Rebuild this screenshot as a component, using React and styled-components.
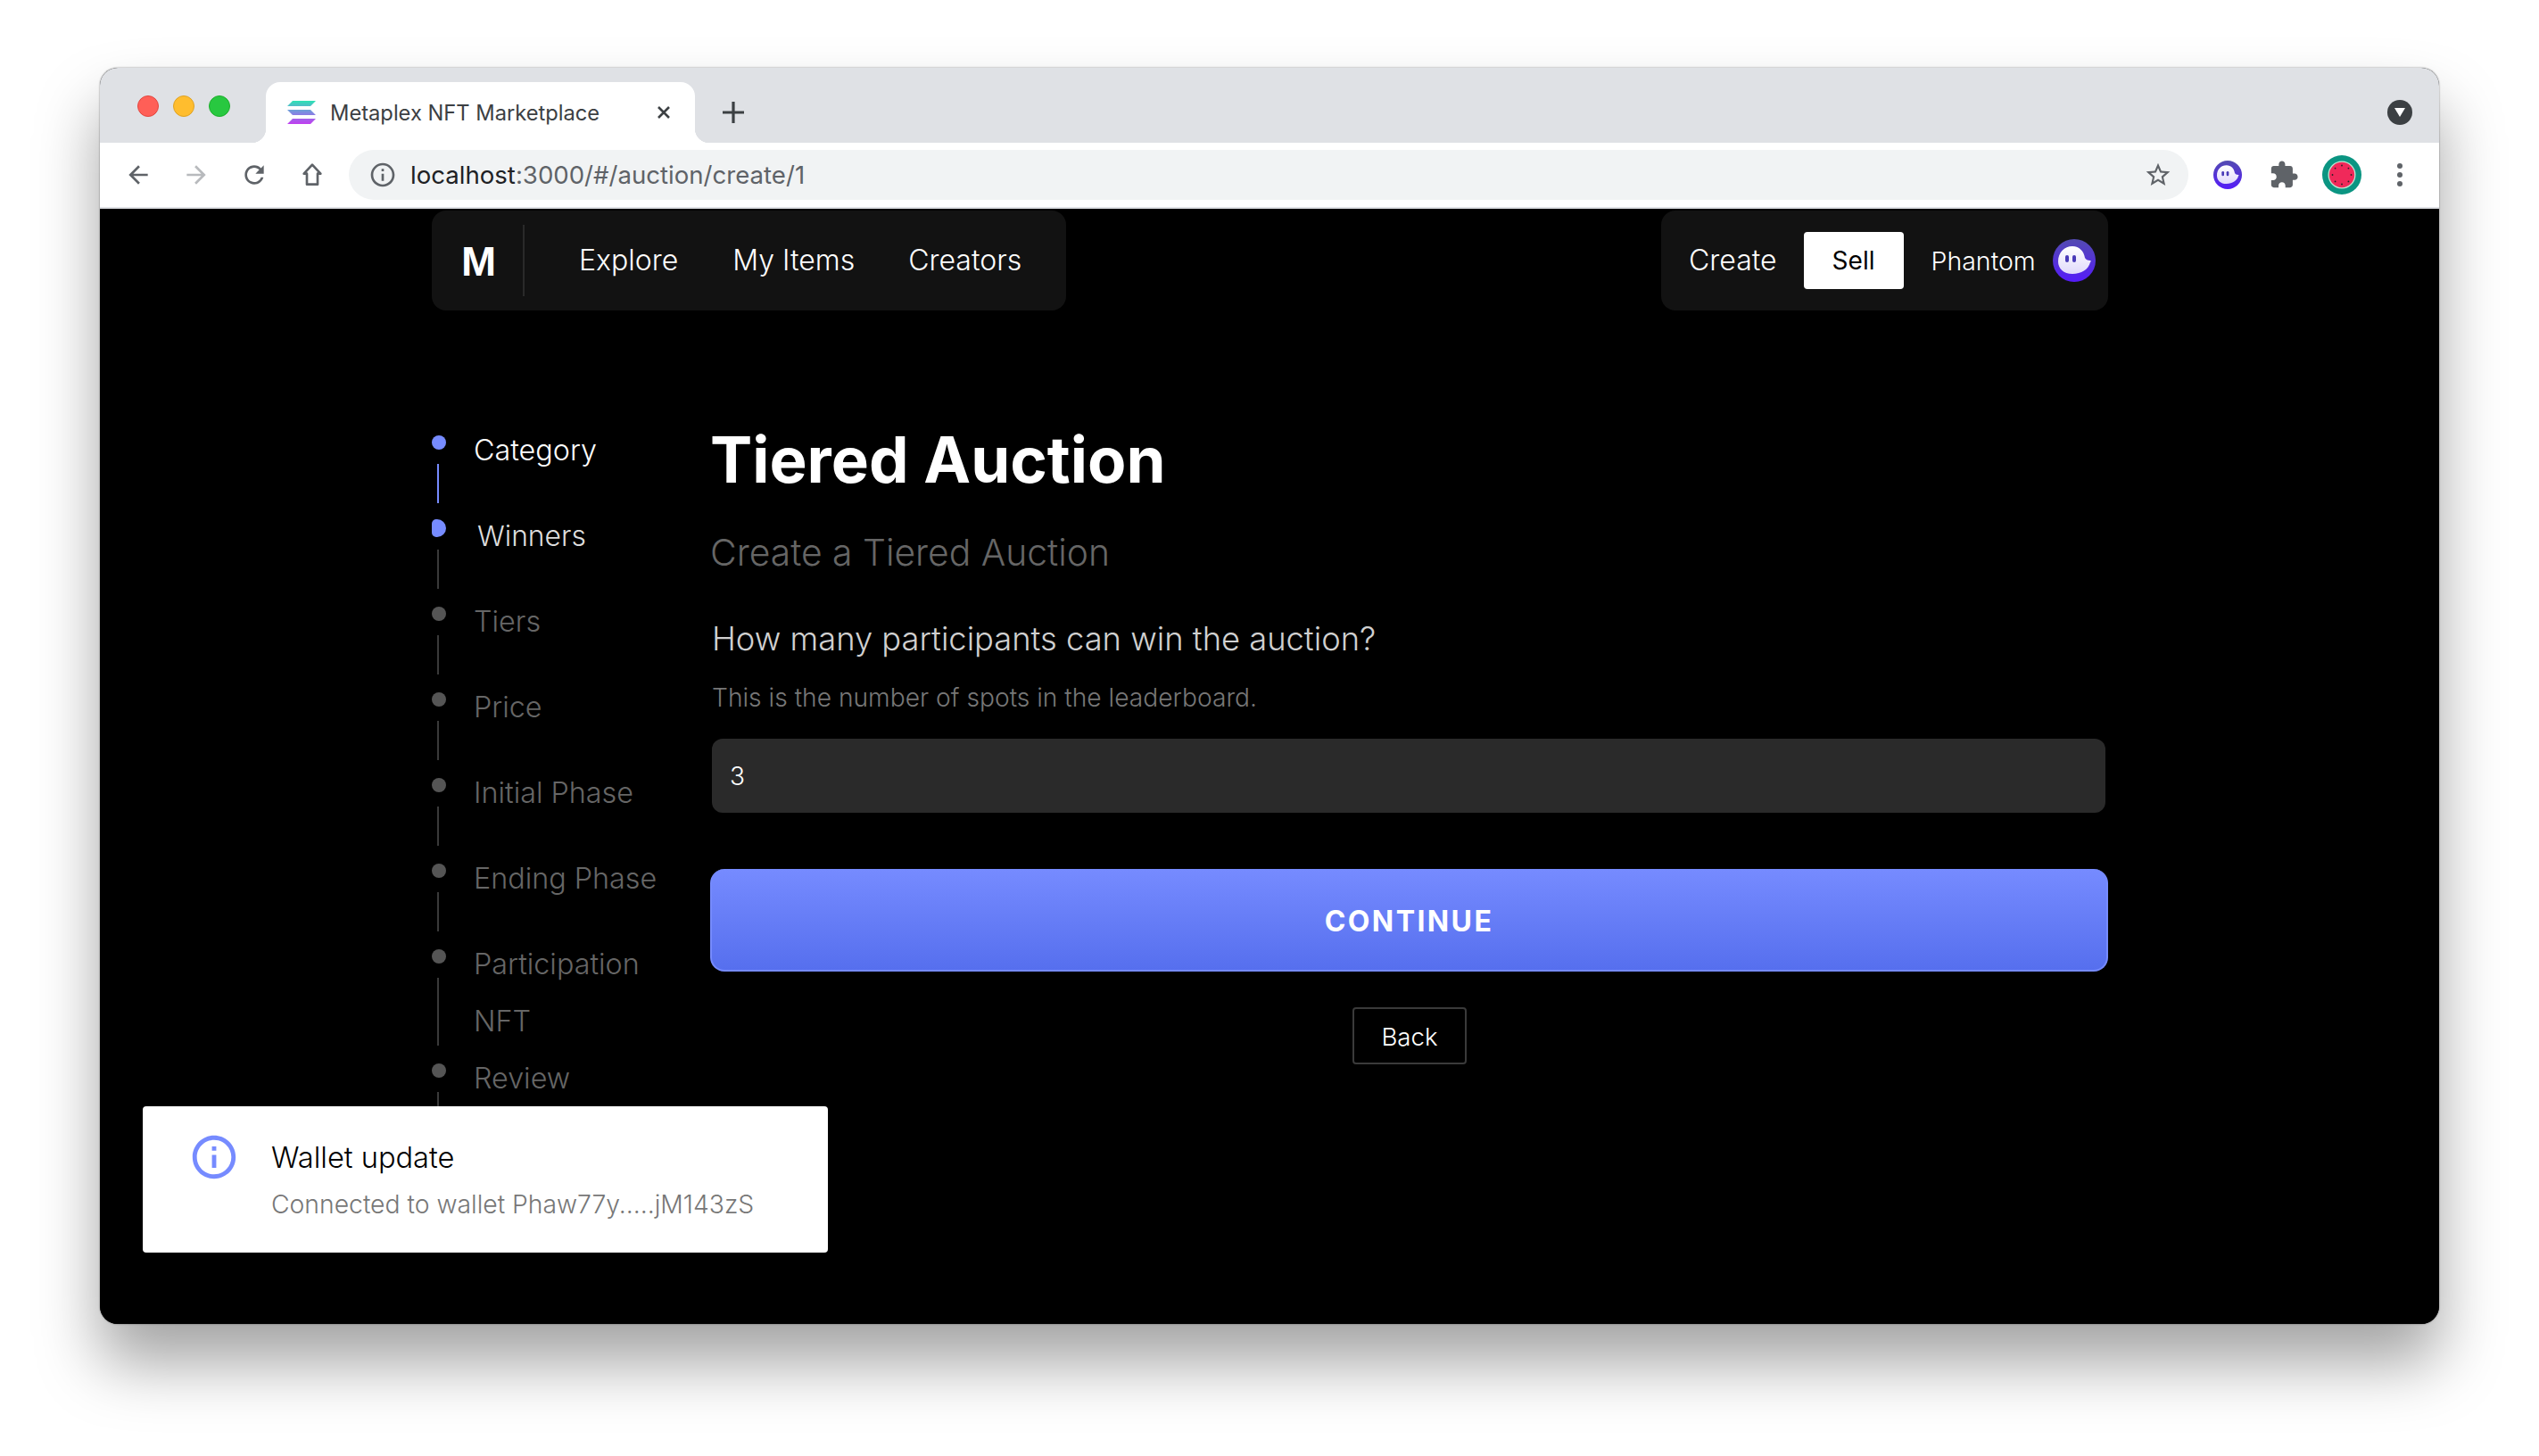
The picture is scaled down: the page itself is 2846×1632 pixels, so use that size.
import React from 'react';
import styled, { createGlobalStyle } from 'styled-components';

const GlobalStyle = createGlobalStyle`
  html, body {
    margin: 0;
    padding: 0;
    background: #fff;
    font-family: Inter, "Liberation Sans", sans-serif;
  }
  * { box-sizing: border-box; }
`;

const Desktop = styled.div`
  width: 2846px;
  height: 1632px;
  padding: 76px 112px 0;
  overflow: hidden;
`;

const BrowserWindow = styled.div`
  position: relative;
  width: 2622px;
  height: 1408px;
  display: flex;
  flex-direction: column;
  border-radius: 20px;
  overflow: hidden;
  background: #000;
`;

const WindowShadow = styled.div`
  border-radius: 20px;
  box-shadow: 0 44px 70px rgba(0, 0, 0, 0.36), 0 0 2px rgba(0, 0, 0, 0.5);
`;

const TabStrip = styled.div`
  height: 84px;
  flex: none;
  display: flex;
  align-items: flex-end;
  background: #dfe1e5;
  padding-left: 42px;
`;

const Lights = styled.div`
  display: flex;
  gap: 16px;
  align-self: flex-start;
  margin-top: 31px;
  width: 144px;
`;

const Light = styled.span`
  width: 24px;
  height: 24px;
  border-radius: 50%;
  background: ${(p) => p.color};
  border: 1px solid ${(p) => p.edge};
`;

const Tab = styled.div`
  position: relative;
  width: 481px;
  height: 68px;
  display: flex;
  align-items: center;
  padding: 0 26px 0 24px;
  background: #fff;
  border-radius: 16px 16px 0 0;
  &::before, &::after {
    content: '';
    position: absolute;
    bottom: 0;
    width: 16px;
    height: 16px;
  }
  &::before {
    left: -16px;
    background: radial-gradient(circle at 0 0, #dfe1e5 16px, #fff 16.5px);
  }
  &::after {
    right: -16px;
    background: radial-gradient(circle at 100% 0, #dfe1e5 16px, #fff 16.5px);
  }
`;

const TabTitle = styled.span`
  margin-left: 16px;
  flex: 1;
  font-size: 23.7px;
  color: #3c4043;
  white-space: nowrap;
`;

const NewTab = styled.div`
  margin-left: 30px;
  height: 68px;
  display: flex;
  align-items: center;
  flex: 1;
`;

const ProfileMenu = styled.div`
  width: 28px;
  height: 28px;
  margin: 0 30px 0 auto;
  border-radius: 50%;
  background: #3c4043;
  display: flex;
  align-items: center;
  justify-content: center;
`;

const Toolbar = styled.div`
  height: 74px;
  flex: none;
  display: flex;
  align-items: center;
  background: #fff;
  border-bottom: 2px solid #dfe1e5;
  padding: 0 0 0 27px;
`;

const NavIcons = styled.div`
  display: flex;
  align-items: center;
  gap: 33px;
  margin-right: 25px;
`;

const Omnibox = styled.div`
  width: 2062px;
  height: 56px;
  flex: none;
  display: flex;
  align-items: center;
  padding: 0 18px 0 22px;
  border-radius: 28px;
  background: #f1f3f4;
`;

const Url = styled.span`
  margin-left: 15px;
  flex: 1;
  font-size: 27.6px;
  color: #5f6368;
  white-space: nowrap;
  b {
    font-weight: 400;
    color: #202124;
  }
`;

const ToolIcons = styled.div`
  display: flex;
  align-items: center;
  margin-left: 28px;
  gap: 30px;
`;

const AvatarSlot = styled.span`
  display: flex;
  margin-left: -4px;
`;

const MenuDots = styled.svg`
  margin-left: 9px;
`;

const Page = styled.div`
  flex: 1;
  min-height: 0;
  background: #000;
  padding: 2px 371px 0 372px;
`;

const Header = styled.header`
  display: flex;
  justify-content: space-between;
`;

const NavBar = styled.nav`
  height: 112px;
  display: flex;
  align-items: center;
  background: #121212;
  border-radius: 16px;
`;

const LeftBar = styled(NavBar)`
  width: 711px;
  padding-left: 33px;
`;

const RightBar = styled(NavBar)`
  width: 501px;
  padding-left: 31px;
`;

const Logo = styled.div`
  width: 71px;
  height: 80px;
  border-right: 2px solid #2a2a2a;
  display: flex;
  align-items: center;
  font: 700 47px "Liberation Sans", sans-serif;
  color: #fff;
`;

const NavLink = styled.a`
  font-size: 32px;
  font-weight: 300;
  color: #fff;
  margin: -2px 0 0 ${(p) => p.gap}px;
  white-space: nowrap;
`;

const SellButton = styled.button`
  width: 112px;
  height: 64px;
  margin: 0 31px 0 30px;
  border: 0;
  border-radius: 4px;
  background: #fff;
  color: #000;
  font: 400 28px Inter, "Liberation Sans", sans-serif;
`;

const WalletName = styled.span`
  font-size: 28.5px;
  font-weight: 300;
  color: #fff;
  margin-right: 19px;
`;

const Main = styled.main`
  display: flex;
  padding-top: 140px;
`;

const Steps = styled.ol`
  width: 313px;
  flex: none;
  margin: 0;
  padding: 0;
  list-style: none;
`;

const Step = styled.li`
  display: flex;
  min-height: 76px;
  margin-bottom: 20px;
`;

const Marker = styled.div`
  width: 16px;
  flex: none;
  display: flex;
  flex-direction: column;
`;

const Dot = styled.span`
  flex: none;
  width: 16px;
  height: ${(p) => (p.$current ? 20 : 16)}px;
  margin: ${(p) => (p.$current ? '-2px 0' : '0')};
  border-radius: ${(p) => (p.$current ? '5px 10px 10px 5px' : '50%')};
  background: ${(p) => (p.$active ? '#768bff' : '#555')};
`;

const Connector = styled.span`
  flex: 1;
  width: 2px;
  margin: 16px 0 0 6px;
  background: ${(p) => (p.$active ? '#768bff' : '#3a3a3a')};
`;

const StepLabel = styled.div`
  margin: -15px 0 -5px ${(p) => (p.$current ? 35 : 31)}px;
  font-size: ${(p) => (p.$current ? 31.8 : 32.3)}px;
  font-weight: 300;
  line-height: 64px;
  width: 240px;
  color: ${(p) => p.tone};
`;

const Content = styled.section`
  width: 1566px;
  flex: none;
  display: flex;
  flex-direction: column;
`;

const Title = styled.h1`
  margin: -15px 0 0 -1px;
  font-size: 70.8px;
  font-weight: 700;
  line-height: 84px;
  color: #fff;
`;

const Subtitle = styled.h2`
  margin: 37px 0 0 -1px;
  font-size: 40.8px;
  font-weight: 300;
  line-height: 50px;
  color: #666;
`;

const Question = styled.p`
  margin: 50px 0 0 1px;
  font-size: 36.3px;
  font-weight: 300;
  line-height: 44px;
  color: #d0d0d0;
`;

const Hint = styled.p`
  margin: 26px 0 0 1px;
  font-size: 28.2px;
  font-weight: 300;
  line-height: 36px;
  color: #777;
`;

const Field = styled.input`
  width: 1562px;
  height: 83px;
  margin: 28px 0 0 1px;
  padding: 0 20px;
  border: 0;
  outline: 0;
  border-radius: 12px;
  background: #2a2a2a;
  color: #fff;
  font: 300 28px Inter, "Liberation Sans", sans-serif;
`;

const ContinueButton = styled.button`
  height: 115px;
  margin: 63px 0 0 -1px;
  padding-top: 4px;
  border: 2px solid #768bff;
  border-top: 0;
  border-radius: 16px;
  background: linear-gradient(180deg, #768bff 0%, #566fee 100%);
  color: #fff;
  font: 700 32px Inter, "Liberation Sans", sans-serif;
  letter-spacing: 2.4px;
`;

const BackButton = styled.button`
  align-self: center;
  width: 128px;
  height: 64px;
  margin-top: 40px;
  padding-top: 3px;
  border: 2px solid #3a3a3a;
  border-radius: 4px;
  background: #000;
  color: #fff;
  font: 300 27.6px Inter, "Liberation Sans", sans-serif;
`;

const Toast = styled.div`
  position: absolute;
  left: 48px;
  top: 1164px;
  width: 768px;
  height: 164px;
  display: flex;
  padding: 28px 0 0 51px;
  background: #fff;
  border-radius: 4px;
`;

const ToastBody = styled.div`
  margin: 5px 0 0 35px;
`;

const ToastTitle = styled.div`
  font-size: 32.6px;
  font-weight: 300;
  line-height: 48px;
  color: #000;
`;

const ToastText = styled.div`
  margin-top: 9px;
  font-size: 28.3px;
  font-weight: 300;
  line-height: 40px;
  color: #777;
  white-space: nowrap;
`;

const steps = [
  { label: 'Category', tone: '#fff', dot: true, line: true },
  { label: 'Winners', tone: '#ddd', dot: true, current: true },
  { label: 'Tiers' },
  { label: 'Price' },
  { label: 'Initial Phase' },
  { label: 'Ending Phase' },
  { label: 'Participation NFT' },
  { label: 'Review' },
];

const Icon = ({ d, size = 24, color = '#5f6368', box = 24 }) => (
  <svg width={size} height={size} viewBox={`0 0 ${box} ${box}`} fill={color}>
    <path d={d} />
  </svg>
);

const SolanaMark = () => (
  <svg width="32" height="26" viewBox="0 0 32 26">
    <defs>
      <linearGradient id="sol" x1="0" y1="0" x2="0" y2="1">
        <stop offset="0" stopColor="#2ce3b4" />
        <stop offset="0.5" stopColor="#7d8ce0" />
        <stop offset="1" stopColor="#c13df0" />
      </linearGradient>
    </defs>
    <path fill="url(#sol)" d="M6 0h26l-6 6H0zM0 10h26l6 6H6zM6 20h26l-6 6H0z" />
  </svg>
);

const PhantomMark = ({ size }) => (
  <svg width={size} height={size} viewBox="0 0 48 48">
    <defs>
      <linearGradient id={`ring${size}`} x1="0" y1="0" x2="0" y2="1">
        <stop offset="0" stopColor="#534bb1" />
        <stop offset="1" stopColor="#551bf9" />
      </linearGradient>
      <linearGradient id={`ghost${size}`} x1="0" y1="0" x2="0" y2="1">
        <stop offset="0" stopColor="#fff" />
        <stop offset="1" stopColor="#e0d9fb" />
      </linearGradient>
    </defs>
    <circle cx="24" cy="24" r="24" fill={`url(#ring${size})`} />
    <path
      fill={`url(#ghost${size})`}
      d="M6 25C6 15 13 8 22 8c8 0 13 6 14 13 1 2 3 3 6 3 1 0 1 1 0 2-2 8-10 13-20 13C12 39 6 33 6 25z"
    />
    <rect x="14" y="18" width="4" height="8" rx="2" fill="#4a3bb8" />
    <rect x="22" y="18" width="4" height="8" rx="2" fill="#4a3bb8" />
  </svg>
);

const WatermelonAvatar = () => (
  <svg width="44" height="44" viewBox="0 0 44 44">
    <circle cx="22" cy="22" r="22" fill="#0b9582" />
    <circle cx="22" cy="22" r="15.5" fill="#bfe6d2" />
    <circle cx="22" cy="22" r="14.2" fill="#f0295a" />
    {[0, 45, 90, 135, 180, 225, 270, 315].map((a) => (
      <circle
        key={a}
        cx={22 + 10.5 * Math.cos((a * Math.PI) / 180)}
        cy={22 + 10.5 * Math.sin((a * Math.PI) / 180)}
        r="0.9"
        fill="#222"
      />
    ))}
  </svg>
);

const App = () => (
  <>
    <GlobalStyle />
    <Desktop>
      <WindowShadow>
        <BrowserWindow>
          <TabStrip>
            <Lights>
              <Light color="#ff5f57" edge="#e2463f" />
              <Light color="#ffbd2e" edge="#dea123" />
              <Light color="#28c840" edge="#1dad2b" />
            </Lights>
            <Tab>
              <SolanaMark />
              <TabTitle>Metaplex NFT Marketplace</TabTitle>
              <svg width="18" height="18" viewBox="0 0 18 18" stroke="#3c4043" strokeWidth="2.6">
                <path d="M3 3l12 12M15 3L3 15" />
              </svg>
            </Tab>
            <NewTab>
              <svg width="26" height="26" viewBox="0 0 26 26" stroke="#3c4043" strokeWidth="3.2">
                <path d="M13 1v24M1 13h24" />
              </svg>
              <ProfileMenu>
                <svg width="14" height="12" viewBox="0 0 14 12" fill="#fff">
                  <path d="M1 1h12L7 11z" />
                </svg>
              </ProfileMenu>
            </NewTab>
          </TabStrip>
          <Toolbar>
            <NavIcons>
              <Icon size={32} d="M20 11H7.83l5.59-5.59L12 4l-8 8 8 8 1.41-1.41L7.83 13H20v-2z" />
              <Icon size={32} color="#b8babd" d="M4 11h12.17l-5.59-5.59L12 4l8 8-8 8-1.41-1.41L16.17 13H4v-2z" />
              <Icon size={32} d="M17.65 6.35C16.2 4.9 14.21 4 12 4c-4.42 0-7.99 3.58-7.99 8s3.57 8 7.99 8c3.73 0 6.84-2.55 7.73-6h-2.08c-.82 2.33-3.04 4-5.65 4-3.31 0-6-2.69-6-6s2.69-6 6-6c1.66 0 3.14.69 4.22 1.78L13 11h7V4l-2.35 2.35z" />
              <svg width="32" height="32" viewBox="0 0 24 24" fill="none" stroke="#5f6368" strokeWidth="2">
                <path d="M12 3.5l7 7.5h-2.5v9h-9v-9H5z" strokeLinejoin="round" />
              </svg>
            </NavIcons>
            <Omnibox>
              <Icon size={32} d="M11 7h2v2h-2zm0 4h2v6h-2zm1-9C6.48 2 2 6.48 2 12s4.48 10 10 10 10-4.48 10-10S17.52 2 12 2zm0 18c-4.41 0-8-3.59-8-8s3.59-8 8-8 8 3.59 8 8-3.59 8-8 8z" />
              <Url><b>localhost</b>:3000/#/auction/create/1</Url>
              <Icon size={32} d="M22 9.24l-7.19-.62L12 2 9.19 8.63 2 9.24l5.46 4.73L5.82 21 12 17.27 18.18 21l-1.63-7.03L22 9.24zM12 15.4l-3.76 2.27 1-4.28-3.32-2.88 4.38-.38L12 6.1l1.71 4.04 4.38.38-3.32 2.88 1 4.28L12 15.4z" />
            </Omnibox>
            <ToolIcons>
              <PhantomMark size={32} />
              <Icon size={34} d="M20.5 11H19V7c0-1.1-.9-2-2-2h-4V3.5C13 2.12 11.88 1 10.5 1S8 2.12 8 3.5V5H4c-1.1 0-1.99.9-1.99 2v3.8H3.5c1.49 0 2.7 1.21 2.7 2.7s-1.21 2.7-2.7 2.7H2V20c0 1.1.9 2 2 2h3.8v-1.5c0-1.49 1.21-2.7 2.7-2.7 1.49 0 2.7 1.21 2.7 2.7V22H17c1.1 0 2-.9 2-2v-4h1.5c1.38 0 2.5-1.12 2.5-2.5S21.88 11 20.5 11z" />
              <AvatarSlot><WatermelonAvatar /></AvatarSlot>
              <MenuDots width="8" height="28" viewBox="0 0 8 28" fill="#5f6368">
                <circle cx="4" cy="4" r="3" />
                <circle cx="4" cy="14" r="3" />
                <circle cx="4" cy="24" r="3" />
              </MenuDots>
            </ToolIcons>
          </Toolbar>
          <Page>
            <Header>
              <LeftBar>
                <Logo>M</Logo>
                <NavLink gap={61}>Explore</NavLink>
                <NavLink gap={61}>My Items</NavLink>
                <NavLink gap={60}>Creators</NavLink>
              </LeftBar>
              <RightBar>
                <NavLink gap={0}>Create</NavLink>
                <SellButton>Sell</SellButton>
                <WalletName>Phantom</WalletName>
                <PhantomMark size={48} />
              </RightBar>
            </Header>
            <Main>
              <Steps>
                {steps.map((step) => (
                  <Step key={step.label}>
                    <Marker>
                      <Dot $active={step.dot} $current={step.current} />
                      <Connector $active={step.line} />
                    </Marker>
                    <StepLabel $current={step.current} tone={step.tone || '#666'}>
                      {step.label}
                    </StepLabel>
                  </Step>
                ))}
              </Steps>
              <Content>
                <Title>Tiered Auction</Title>
                <Subtitle>Create a Tiered Auction</Subtitle>
                <Question>How many participants can win the auction?</Question>
                <Hint>This is the number of spots in the leaderboard.</Hint>
                <Field readOnly value="3" />
                <ContinueButton>CONTINUE</ContinueButton>
                <BackButton>Back</BackButton>
              </Content>
            </Main>
          </Page>
          <Toast>
            <Icon size={58} color="#768bff" d="M11 7h2v2h-2zm0 4h2v6h-2zm1-9C6.48 2 2 6.48 2 12s4.48 10 10 10 10-4.48 10-10S17.52 2 12 2zm0 18c-4.41 0-8-3.59-8-8s3.59-8 8-8 8 3.59 8 8-3.59 8-8 8z" />
            <ToastBody>
              <ToastTitle>Wallet update</ToastTitle>
              <ToastText>Connected to wallet Phaw77y.....jM143zS</ToastText>
            </ToastBody>
          </Toast>
        </BrowserWindow>
      </WindowShadow>
    </Desktop>
  </>
);

export default App;
